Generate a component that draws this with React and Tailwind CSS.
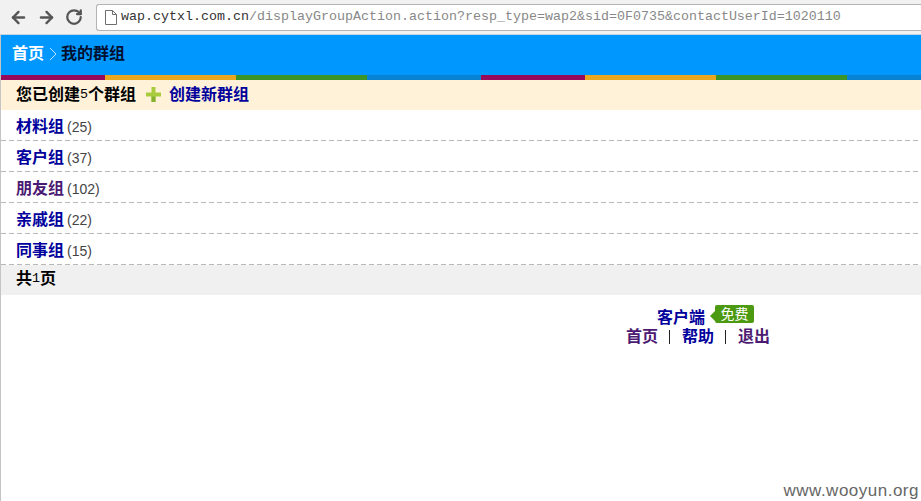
import React from "react";
import { ArrowLeft, ArrowRight, RotateCw } from "lucide-react";

const cjk = { fontFamily: '"Liberation Sans","Noto Sans CJK SC",sans-serif' };
const mono = { fontFamily: '"Liberation Mono",monospace' };

const stripes = [
  ["w-[104px]", "bg-[#960a5c]"],
  ["w-[131px]", "bg-[#e8a71f]"],
  ["w-[131px]", "bg-[#3c9426]"],
  ["w-[114px]", "bg-[#0a82d2]"],
];

const groups = [
  ["材料组", "(25)", "text-[#00009c]"],
  ["客户组", "(37)", "text-[#00009c]"],
  ["朋友组", "(102)", "text-[#4b1a72]"],
  ["亲戚组", "(22)", "text-[#00009c]"],
  ["同事组", "(15)", "text-[#00009c]"],
];

export default function App() {
  return (
    <div className="w-[921px] h-[501px] overflow-hidden bg-white relative" style={cjk}>
      <div className="h-[35px] bg-[#f1f1f1] border-b border-[#c4d4e4] flex items-center">
        <div className="flex items-center gap-[9px] pl-[9px] w-[96px] text-[#555555]">
          <ArrowLeft size={19} strokeWidth={3} />
          <ArrowRight size={19} strokeWidth={3} />
          <RotateCw size={18} strokeWidth={3} />
        </div>
        <div className="w-[825px] h-[27px] bg-white border border-[#b4b4b4] rounded-l-[3px] border-r-0 flex items-center pl-[7px]">
          <svg width="14" height="17" viewBox="0 0 14 17" fill="none" stroke="#6e6e6e" strokeWidth="1" className="shrink-0">
            <path d="M1.5 1.5h7l4 4v10h-11z" />
            <path d="M8.5 1.5v4h4" />
          </svg>
          <span className="ml-[3px] text-[13.33px] leading-none whitespace-nowrap text-[#888888]" style={mono}>
            <span className="text-[#333333]">wap.cytxl.com.cn</span>/displayGroupAction.action?resp_type=wap2&amp;sid=0F0735&amp;contactUserId=1020110
          </span>
        </div>
      </div>

      <div className="border-l border-[#c4c4c4] h-[466px]">
        <div className="h-[40px] bg-[#0098ff] flex items-center pl-[11px] pb-[2px] text-[16px] font-bold leading-none">
          <span className="text-white">首页</span>
          <svg width="8" height="14" viewBox="0 0 8 14" fill="none" stroke="#b8e2ff" strokeWidth="1" className="ml-[5px] mr-[4px]">
            <path d="M1 1l6 6-6 6" />
          </svg>
          <span className="text-[#001030]">我的群组</span>
        </div>

        <div className="h-[5px] flex overflow-hidden">
          {[0, 1].map((n) =>
            stripes.map(([w, c], i) => <div key={`${n}-${i}`} className={`${w} ${c} h-full shrink-0`} />)
          )}
        </div>

        <div className="h-[30px] bg-[#fff2d9] flex items-center pl-[15px] text-[16px] font-bold leading-none text-black">
          <span className="flex items-center">您已创建<span className="font-normal text-[13.33px]" style={mono}>5</span>个群组</span>
          <svg width="15" height="15" viewBox="0 0 15 15" className="ml-[10px] mb-[2px]">
            <path d="M5.5 0h4v5.5H15v4H9.5V15h-4V9.5H0v-4h5.5z" fill="#a8cc3c" />
            <path d="M5.5 9.5h4V15h-4z" fill="#86b030" />
          </svg>
          <span className="ml-[8px] text-[#00009c]">创建新群组</span>
        </div>

        {groups.map(([name, count, color]) => (
          <div key={name} className="h-[31px] bg-[repeating-linear-gradient(90deg,#b8b8b8_0_5px,transparent_5px_8px)] bg-[length:100%_1px] bg-bottom bg-no-repeat flex items-center pl-[15px] pt-[2px] leading-none">
            <span className={`text-[16px] font-bold ${color}`}>{name}</span>
            <span className="ml-[3px] text-[14px] text-[#444444]">{count}</span>
          </div>
        ))}

        <div className="h-[30px] bg-[#f0f0f0] flex items-center pl-[15px] pb-[2px] text-[16px] leading-none text-black">
          <span className="font-bold">共</span>
          <span className="text-[13.33px]" style={mono}>1</span>
          <span className="font-bold">页</span>
        </div>

        <div className="w-[769px] flex flex-col items-end pt-[10px] text-[16px] font-bold leading-none">
          <div className="flex items-center pr-[16px] h-[20px]">
            <span className="text-[#00009c] mt-[6px]">客户端</span>
            <span className="relative ml-[10px] mb-[3px] h-[18px] w-[39px] bg-[#4c9a12] rounded-[2px] text-white font-normal text-[14px] flex items-center justify-center">
              <span className="absolute -left-[5px] top-[6px] w-0 h-0 border-y-[5px] border-y-transparent border-r-[5px] border-r-[#4c9a12]" />
              免费
            </span>
          </div>
          <div className="flex items-center h-[19px] mt-[2px]">
            <span className="text-[#4b1a72]">首页</span>
            <span className="ml-[11px] mr-[12px] w-px h-[14px] bg-[#222222]" />
            <span className="text-[#00009c]">帮助</span>
            <span className="ml-[11px] mr-[12px] w-px h-[14px] bg-[#222222]" />
            <span className="text-[#4b1a72]">退出</span>
          </div>
        </div>
      </div>

      <div className="absolute right-[2px] bottom-0 text-[17px] leading-[20px] tracking-[0.5px] text-[#666666]">www.wooyun.org</div>
    </div>
  );
}
